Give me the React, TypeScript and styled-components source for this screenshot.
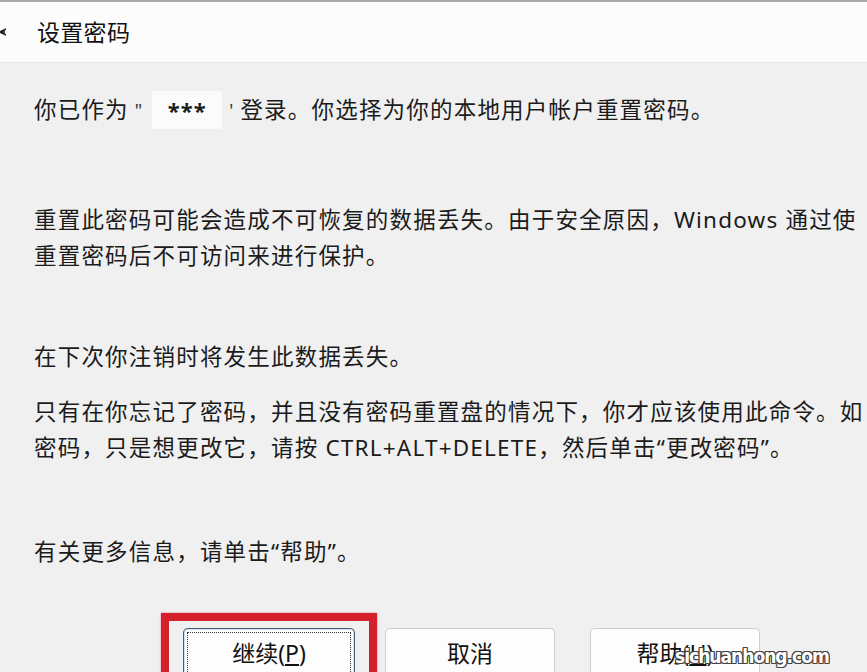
import React from 'react';
import styled, { createGlobalStyle } from 'styled-components';

const GlobalStyle = createGlobalStyle`
    html, body {
        margin: 0;
        padding: 0;
        background: #f0f0f1;
        overflow: hidden;
    }
    body {
        font-family: "Noto Sans", "Noto Sans CJK SC", sans-serif;
        color: #1b1b1b;
    }
`;

const Window = styled.div`
    width: 867px;
    height: 672px;
    display: flex;
    flex-direction: column;
    overflow: hidden;
    border-top: 2px solid #a9a9ab;
    box-sizing: border-box;
`;

const TitleBar = styled.div`
    height: 60px;
    flex-shrink: 0;
    display: flex;
    align-items: center;
    background: #fcfcfd;
    border-bottom: 1px solid #e6e6e8;
`;

const TitleIcon = styled.svg`
    width: 6px;
    height: 14px;
    margin-right: 31px;
    flex-shrink: 0;
`;

const Title = styled.div`
    font-size: 23px;
    line-height: 30px;
    letter-spacing: 0.3px;
    color: #111;
`;

const Body = styled.div`
    flex: 1;
    display: flex;
    flex-direction: column;
    padding: 29px 0 0 34px;
    background: #f0f0f1;
`;

const Para = styled.div<{ top: number }>`
    margin-top: ${({ top }) => top}px;
    display: flex;
    flex-direction: column;
`;

const Line = styled.div`
    font-size: 22.5px;
    line-height: 36px;
    height: 36px;
    letter-spacing: 1.2px;
    white-space: nowrap;
    display: flex;
    align-items: center;
`;

const Masked = styled.span`
    display: inline-flex;
    align-items: center;
    justify-content: center;
    width: 70px;
    height: 38px;
    margin: 0 7px 0 9px;
    background: #fbfbfc;
    font-weight: 700;
    font-size: 22px;
    letter-spacing: 1px;
`;

const Quote = styled.span`
    font-size: 18px;
    color: #333;
`;

const ButtonRow = styled.div`
    margin-top: 43px;
    display: flex;
    align-items: flex-start;
    padding-left: 127px;
`;

const Highlight = styled.div`
    border: 8px solid #d3202b;
    border-bottom: none;
    padding: 7px 14px 0 14px;
    height: 60px;
    box-sizing: border-box;
    margin-right: 8px;
    box-shadow: 0 0 2px rgba(210, 30, 40, 0.5);
`;

const Button = styled.div<{ focused?: boolean; w: number; gapRight?: number }>`
    position: relative;
    width: ${({ w }) => w}px;
    height: 52px;
    box-sizing: border-box;
    margin-right: ${({ gapRight }) => gapRight ?? 0}px;
    margin-top: ${({ focused }) => (focused ? 0 : 15)}px;
    display: flex;
    justify-content: center;
    padding-top: 9px;
    font-size: 23px;
    line-height: 30px;
    color: #111;
    background: #fdfdfd;
    border: 1px solid ${({ focused }) => (focused ? '#4d5a6a' : '#cfcfd2')};
    border-bottom: none;
    border-radius: 5px 5px 0 0;
    box-shadow: ${({ focused }) => (focused ? 'inset 0 0 0 1px #cfe3f5' : 'none')};
`;

const FocusRing = styled.div`
    position: absolute;
    left: 3px;
    right: 3px;
    top: 3px;
    bottom: 0;
    border: 1px dotted #333;
    border-bottom: none;
    pointer-events: none;
`;

const Accel = styled.span`
    text-decoration: underline;
`;

const Watermark = styled.div`
    position: absolute;
    left: 84px;
    top: 12px;
    font-family: "DejaVu Sans Condensed", "DejaVu Sans", sans-serif;
    font-stretch: condensed;
    font-weight: 700;
    font-size: 19px;
    letter-spacing: -1px;
    color: #ffffff;
    white-space: nowrap;
    text-shadow:
        -1px -1px 0 #444, 1px -1px 0 #444, -1px 1px 0 #444, 1px 1px 0 #444,
        0 -1px 0 #444, 0 1px 0 #444, -1px 0 0 #444, 1px 0 0 #444;
`;

const App: React.FC = () => {
    return (
        <>
            <GlobalStyle />
            <Window>
                <TitleBar>
                    <TitleIcon viewBox="0 0 6 14">
                        <path d="M0 7 L6 4 M0 7 L6 10 M0 7 L5 7" stroke="#222" strokeWidth="1.6" fill="none" />
                    </TitleIcon>
                    <Title>设置密码</Title>
                </TitleBar>
                <Body>
                    <Para top={0}>
                        <Line>
                            你已作为<Quote>&nbsp;"</Quote>
                            <Masked>***</Masked>
                            <Quote>'&nbsp;</Quote>登录。你选择为你的本地用户帐户重置密码。
                        </Line>
                    </Para>
                    <Para top={74}>
                        <Line>重置此密码可能会造成不可恢复的数据丢失。由于安全原因，Windows 通过使</Line>
                        <Line>重置密码后不可访问来进行保护。</Line>
                    </Para>
                    <Para top={65}>
                        <Line>在下次你注销时将发生此数据丢失。</Line>
                    </Para>
                    <Para top={19}>
                        <Line>只有在你忘记了密码，并且没有密码重置盘的情况下，你才应该使用此命令。如</Line>
                        <Line>密码，只是想更改它，请按 CTRL+ALT+DELETE，然后单击“更改密码”。</Line>
                    </Para>
                    <Para top={68}>
                        <Line>有关更多信息，请单击“帮助”。</Line>
                    </Para>
                    <ButtonRow>
                        <Highlight>
                            <Button focused w={172}>
                                <FocusRing />
                                继续(<Accel>P</Accel>)
                            </Button>
                        </Highlight>
                        <Button w={170} gapRight={35}>取消</Button>
                        <Button w={170}>
                            帮助(<Accel>H</Accel>)
                            <Watermark>sichuanhong.com</Watermark>
                        </Button>
                    </ButtonRow>
                </Body>
            </Window>
        </>
    );
};

export default App;
